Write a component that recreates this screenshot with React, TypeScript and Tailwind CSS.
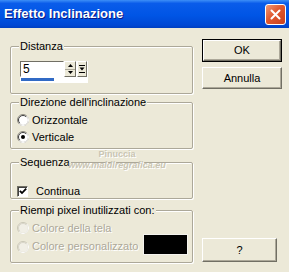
import React from 'react';

// Classic sunken radio, drawn as small svg
const Radio = ({ checked = false, disabled = false }: { checked?: boolean; disabled?: boolean }) => (
  <svg width="12" height="12" viewBox="0 0 12 12" className="shrink-0">
    <circle cx="6" cy="6" r="5.5" fill={disabled ? '#f1efe6' : '#ffffff'} stroke={disabled ? '#c9c6b6' : '#8d8a7e'} />
    <path d="M2.1 9.9 A5.5 5.5 0 0 0 9.9 2.1" fill="none" stroke="#ffffff" />
    <path d="M2.8 9.2 A4.5 4.5 0 0 1 9.2 2.8" fill="none" stroke={disabled ? '#d8d5c8' : '#404040'} />
    {checked && <circle cx="6" cy="6" r="2" fill="#000000" />}
  </svg>
);

const Group = ({ label, className, children }: { label: string; className: string; children?: React.ReactNode }) => (
  <div className={`relative rounded-[2px] border border-[#aca899] shadow-[inset_1px_1px_0_#fff,1px_1px_0_#fff] ${className}`}>
    <span className="absolute -top-[8px] left-[8px] bg-[#ECE9D8] px-[1px] leading-[14px] text-black">{label}</span>
    {children}
  </div>
);

const Button = ({ label, primary = false, className = '' }: { label: string; primary?: boolean; className?: string }) => (
  <div className={`${primary ? 'border border-black' : ''} ${className}`}>
    <div className="flex h-full items-center justify-center border border-t-white border-l-white border-b-[#716f64] border-r-[#716f64] shadow-[inset_-1px_-1px_0_#aca899] bg-[#ECE9D8]">
      {label}
    </div>
  </div>
);

const App: React.FC = () => {
  return (
    <div className="relative h-[272px] w-[289px] overflow-hidden bg-[#ECE9D8] text-[11px] text-black [font-family:'Liberation_Sans',Arial,sans-serif]">
      {/* Title bar */}
      <div className="flex h-[28px] items-center justify-between bg-[linear-gradient(to_bottom,#3d8ff7_0%,#0a5cea_12%,#0055e5_55%,#0048d4_90%,#003fc0_100%)] pl-[4px] pr-[3px]">
        <span className="text-[13px] font-bold text-white [text-shadow:1px_1px_0_#0a1883]">Effetto Inclinazione</span>
        <div className="flex h-[21px] w-[21px] items-center justify-center rounded-[3px] border border-white bg-[linear-gradient(135deg,#f09a78_0%,#e0582f_45%,#c9401c_100%)]">
          <svg width="11" height="11" viewBox="0 0 11 11">
            <path d="M1.5 1.5 L9.5 9.5 M9.5 1.5 L1.5 9.5" stroke="#ffffff" strokeWidth="2" strokeLinecap="round" />
          </svg>
        </div>
      </div>

      {/* Body */}
      <div className="flex pl-[10px]">
        <div className="mt-[18px] flex w-[183px] flex-col">
          <Group label="Distanza" className="h-[48px] pl-[9px] pt-[14px]">
            <div className="h-[22px] w-[68px] bg-white">
              <div className="flex h-[16px]">
                <div className="flex h-[16px] w-[44px] items-center border border-t-[#716f64] border-l-[#716f64] border-b-white border-r-white pl-[2px] text-[12px]">
                  5
                </div>
                <div className="flex w-[12px] flex-col border border-t-white border-l-white border-b-[#716f64] border-r-[#716f64] bg-[#ECE9D8]">
                  <div className="flex flex-1 items-center justify-center border-b border-[#aca899]">
                    <svg width="5" height="3" viewBox="0 0 5 3"><path d="M0 3 L2.5 0 L5 3 Z" fill="#000" /></svg>
                  </div>
                  <div className="flex flex-1 items-center justify-center">
                    <svg width="5" height="3" viewBox="0 0 5 3"><path d="M0 0 L2.5 3 L5 0 Z" fill="#000" /></svg>
                  </div>
                </div>
                <div className="ml-[1px] flex w-[10px] items-center justify-center border border-t-white border-l-white border-b-[#716f64] border-r-[#716f64] bg-[#ECE9D8]">
                  <svg width="6" height="8" viewBox="0 0 6 8">
                    <path d="M0 0.5 H6 M0 7.5 H6" stroke="#000" strokeWidth="1" />
                    <path d="M0.5 2.5 L3 5.5 L5.5 2.5 Z" fill="#000" />
                  </svg>
                </div>
              </div>
              <div className="ml-[1px] mt-[1px] h-[3px] w-[33px] bg-[#316ac5]" />
            </div>
          </Group>

          <Group label="Direzione dell'inclinazione" className="mt-[8px] h-[47px] pl-[6px] pt-[9px]">
            <div className="flex h-[16px] items-center gap-[3px]">
              <Radio />
              <span>Orizzontale</span>
            </div>
            <div className="mt-[1px] flex h-[16px] items-center gap-[3px]">
              <Radio checked />
              <span>Verticale</span>
            </div>
          </Group>

          <Group label="Sequenza" className="mt-[13px] h-[37px] pl-[6px] pt-[20px]">
            <div className="flex h-[16px] items-center gap-[8px]">
              <div className="flex h-[11px] w-[11px] items-center justify-center border border-t-[#716f64] border-l-[#716f64] border-b-white border-r-white bg-white shadow-[inset_1px_1px_0_#404040]">
                <svg width="8" height="8" viewBox="0 0 8 8">
                  <path d="M0.8 3.8 L3 6 L7.2 1.6" fill="none" stroke="#000" strokeWidth="1.8" />
                </svg>
              </div>
              <span>Continua</span>
            </div>
          </Group>

          <Group label="Riempi pixel inutilizzati con:" className="mt-[11px] h-[53px] pl-[6px] pr-[4px] pt-[9px]">
            <div className="flex h-[16px] items-center gap-[3px]">
              <Radio disabled />
              <span className="text-[#aca899] [text-shadow:1px_1px_0_#ffffff]">Colore della tela</span>
            </div>
            <div className="-mt-[2px] flex items-end justify-between">
              <div className="flex h-[16px] items-center gap-[3px] pb-[1px]">
                <Radio disabled />
                <span className="text-[#aca899] [text-shadow:1px_1px_0_#ffffff]">Colore personalizzato</span>
              </div>
              <div className="h-[21px] w-[45px] border border-[#f4f3ee] bg-black" />
            </div>
          </Group>
        </div>

        <div className="ml-[9px] mt-[11px] flex h-[223px] w-[80px] flex-col">
          <Button label="OK" primary className="h-[23px]" />
          <Button label="Annulla" className="mt-[5px] h-[22px]" />
          <Button label="?" className="mt-auto h-[24px] w-[75px]" />
        </div>
      </div>

      {/* Watermark */}
      <div className="pointer-events-none absolute left-[67px] top-[149px] flex w-[100px] flex-col items-center text-[#c9c5b3] [text-shadow:1px_1px_0_#ffffff] font-bold">
        <span className="text-[9px] leading-[11px]">Pinuccia</span>
        <span className="text-[9px] italic leading-[11px]">www.maldiregrafica.eu</span>
      </div>
    </div>
  );
};

export default App;
